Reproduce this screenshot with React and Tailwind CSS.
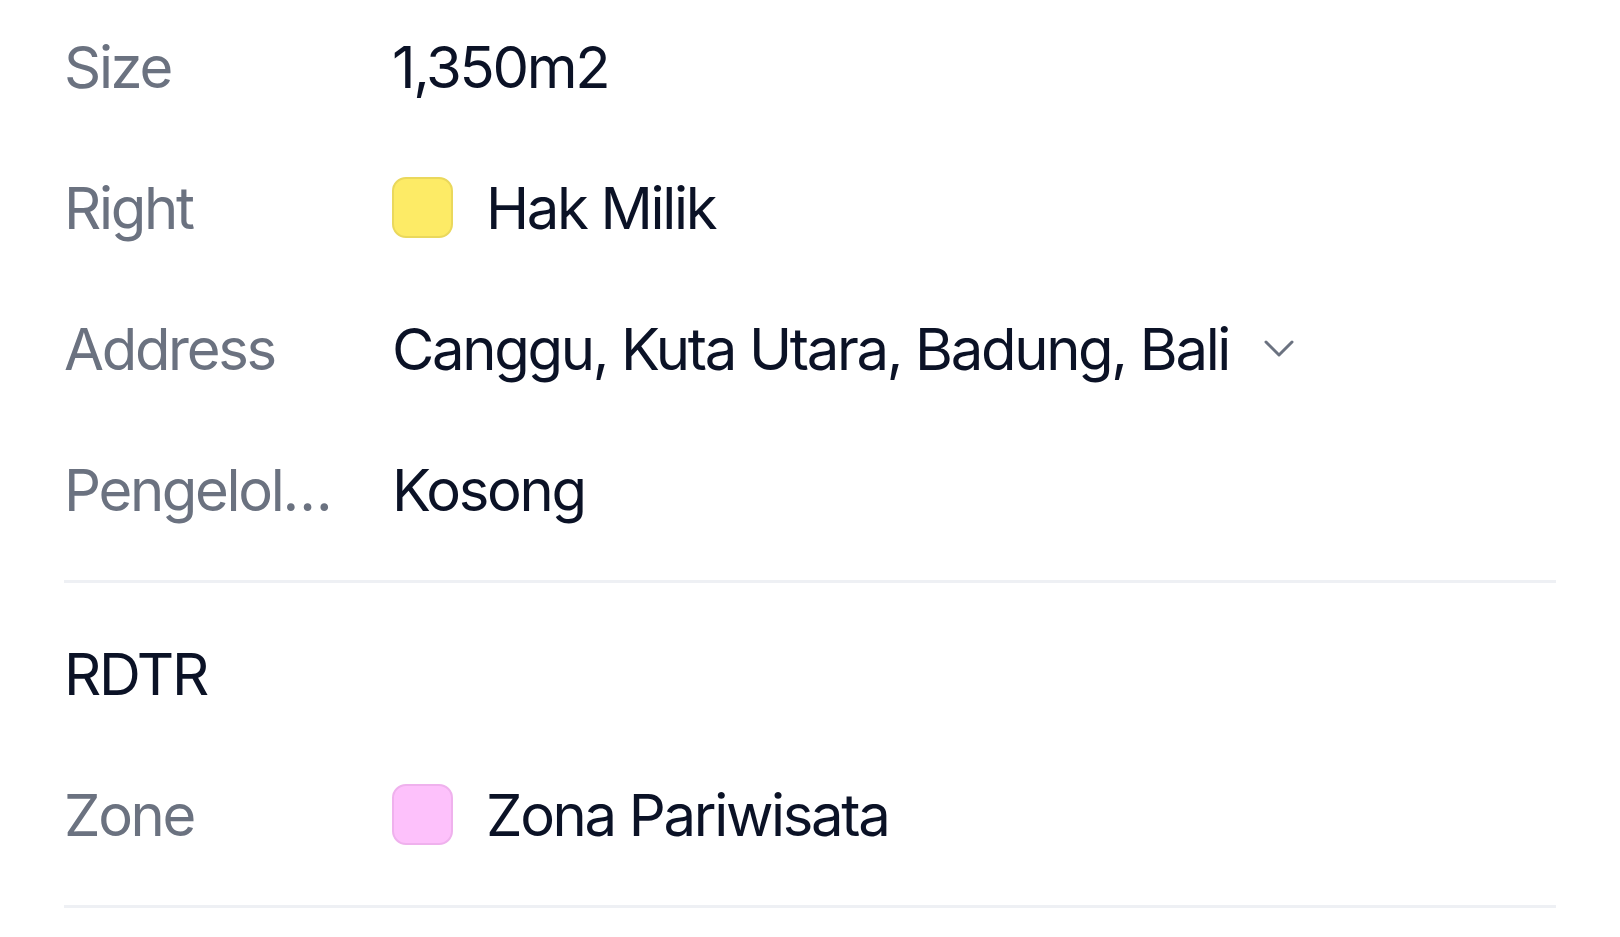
const rows = [
  { label: "Size", value: "1,350m2" },
  { label: "Right", value: "Hak Milik", swatch: "bg-[#fdeb66] border-[#ead85c]" },
  { label: "Address", value: "Canggu, Kuta Utara, Badung, Bali", chevron: true },
  { label: "Pengelol…", value: "Kosong" },
];

const Row = ({ label, value, swatch, chevron }) => (
  <div className="flex h-[141px] items-center">
    <div className="w-[328px] shrink-0 whitespace-nowrap text-[#6b7280]">{label}</div>
    <div className="flex items-center text-[#0b1226]">
      {swatch && (
        <span className={`mr-[33px] h-[61px] w-[61px] rounded-[14px] border-2 ${swatch}`} />
      )}
      <span>{value}</span>
      {chevron && (
        <svg className="ml-[35px]" width="30" height="18" viewBox="0 0 30 18" fill="none">
          <polyline points="2,2 15,15 28,2" stroke="#6b7280" strokeWidth="3" strokeLinecap="round" strokeLinejoin="round" />
        </svg>
      )}
    </div>
  </div>
);

export default function App() {
  return (
    <div
      className="min-h-screen bg-white px-[64px] text-[58px] leading-[70px] tracking-[-0.04em]"
      style={{ fontFamily: "Inter, 'Noto Sans', sans-serif" }}
    >
      <div className="-mt-[4px]">
        {rows.map((r) => (
          <Row key={r.label} {...r} />
        ))}
      </div>
      <div className="mt-5 h-[3px] bg-[#eef0f4]" />
      <div className="mt-5 flex h-[141px] items-center text-[#0b1226]">RDTR</div>
      <Row label="Zone" value="Zona Pariwisata" swatch="bg-[#fdc1fb] border-[#efb1ed]" />
      <div className="mt-5 h-[3px] bg-[#eef0f4]" />
    </div>
  );
}
